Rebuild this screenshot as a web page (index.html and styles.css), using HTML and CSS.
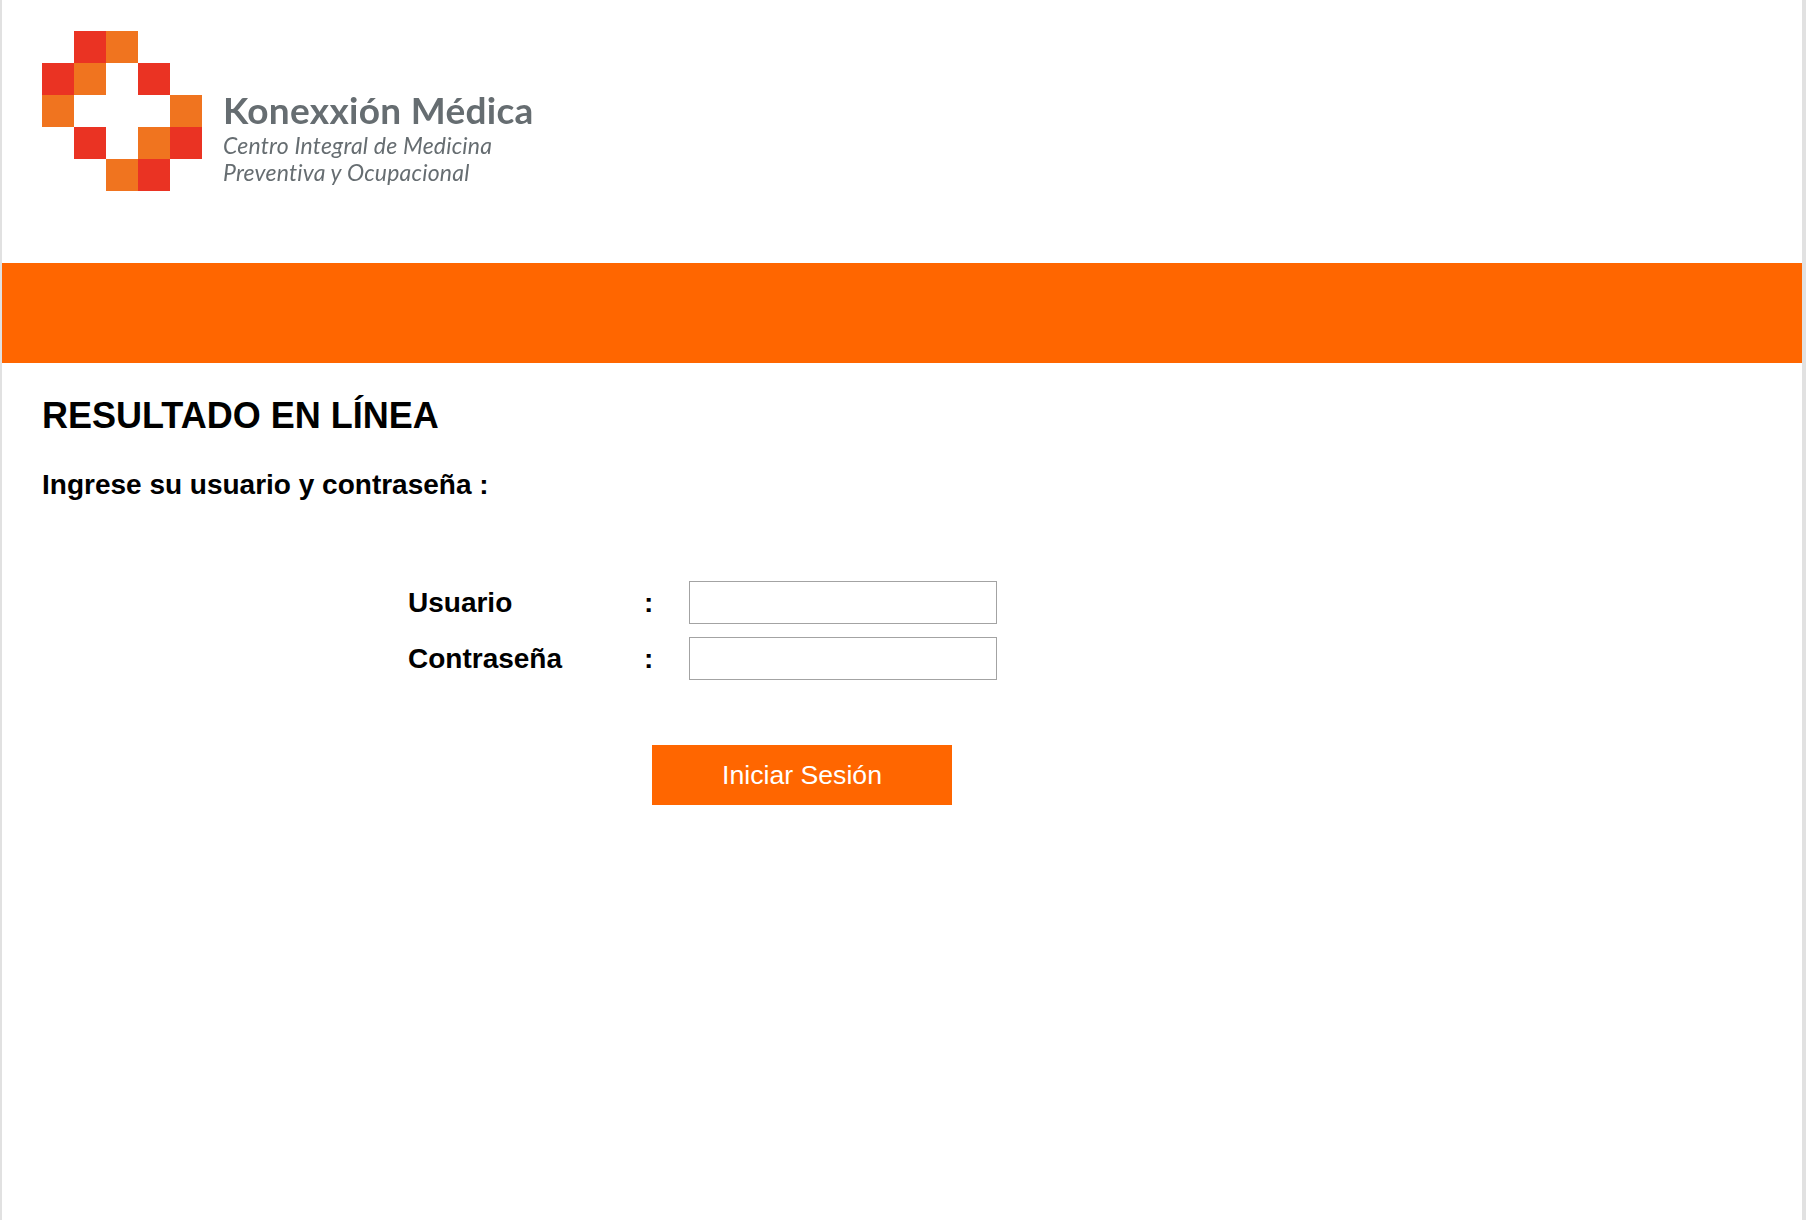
FILE: index.html
```html
<!DOCTYPE html>
<html lang="es">
<head>
  <meta charset="UTF-8">
  <title>Resultado en línea | Konexxión Médica</title>
  <link rel="stylesheet" href="styles.css">
</head>
<body>
  <div class="page">

    <header class="top">
      <svg class="logo-mark" width="160" height="160" viewBox="0 0 160 160" aria-hidden="true">
        <g fill="#ea3323">
          <rect x="32" y="0" width="32" height="32"/>
          <rect x="0" y="32" width="32" height="32"/>
          <rect x="96" y="32" width="32" height="32"/>
          <rect x="32" y="96" width="32" height="32"/>
          <rect x="128" y="96" width="32" height="32"/>
          <rect x="96" y="128" width="32" height="32"/>
        </g>
        <g fill="#f0741f">
          <rect x="64" y="0" width="32" height="32"/>
          <rect x="32" y="32" width="32" height="32"/>
          <rect x="0" y="64" width="32" height="32"/>
          <rect x="128" y="64" width="32" height="32"/>
          <rect x="96" y="96" width="32" height="32"/>
          <rect x="64" y="128" width="32" height="32"/>
        </g>
      </svg>
      <div class="logo-text">
        <div class="logo-name">Konexxión Médica</div>
        <div class="logo-sub">Centro Integral de Medicina</div>
        <div class="logo-sub">Preventiva y Ocupacional</div>
      </div>
    </header>

    <div class="band"></div>

    <main class="content">
      <h1>RESULTADO EN LÍNEA</h1>
      <h2>Ingrese su usuario y contraseña :</h2>

      <form class="login" onsubmit="return false">
        <div class="login-fields">
          <label for="usuario">Usuario</label>
          <span class="sep">:</span>
          <input id="usuario" type="text">

          <label for="clave">Contraseña</label>
          <span class="sep">:</span>
          <input id="clave" type="password">
        </div>

        <button type="submit">Iniciar Sesión</button>
      </form>
    </main>

  </div>
</body>
</html>
```

FILE: styles.css
```css
body {
  margin: 0;
  background-color: #e1e1e1;
  color: #000;
  font-family: "Liberation Sans", Arial, sans-serif;
}

.page {
  margin: 0 4px 0 2px;
  min-height: 100vh;
  background-color: #fff;
}

.top {
  height: 263px;
  box-sizing: border-box;
  padding: 31px 0 0 40px;
  display: flex;
  align-items: flex-start;
  gap: 21px;
}

.logo-mark {
  flex: none;
  filter: blur(0.4px);
}

.logo-text {
  padding-top: 58px;
  color: #666d71;
  font-family: Lato, "Noto Sans", sans-serif;
  filter: blur(0.5px);
}

.logo-name {
  font-size: 37px;
  font-weight: 700;
  letter-spacing: 0.3px;
  line-height: 41px;
  margin-bottom: 2px;
}

.logo-sub {
  font-size: 23px;
  font-style: italic;
  letter-spacing: 0.2px;
  line-height: 27px;
}

.band {
  height: 100px;
  background-color: #ff6600;
}

.content {
  padding: 33px 40px 0;
}

h1 {
  margin: 0;
  font-size: 36px;
  line-height: 40px;
}

h2 {
  margin: 29px 0 0;
  font-size: 28px;
  line-height: 40px;
}

.login {
  margin: 76px 0 0 366px;
  width: 600px;
}

.login-fields {
  display: grid;
  grid-template-columns: 236px 45px 308px;
  grid-auto-rows: 43px;
  row-gap: 13px;
  align-items: center;
  font-size: 28px;
  font-weight: 700;
}

.login-fields input {
  box-sizing: border-box;
  width: 308px;
  height: 43px;
  padding: 0 6px;
  background-color: #fff;
  border: 1px solid #a3a3a3;
}

.login button {
  display: block;
  margin: 65px 0 0 244px;
  width: 300px;
  height: 60px;
  background-color: #ff6600;
  border: none;
  color: #fff;
  font-family: inherit;
  font-size: 26.67px;
}
```
